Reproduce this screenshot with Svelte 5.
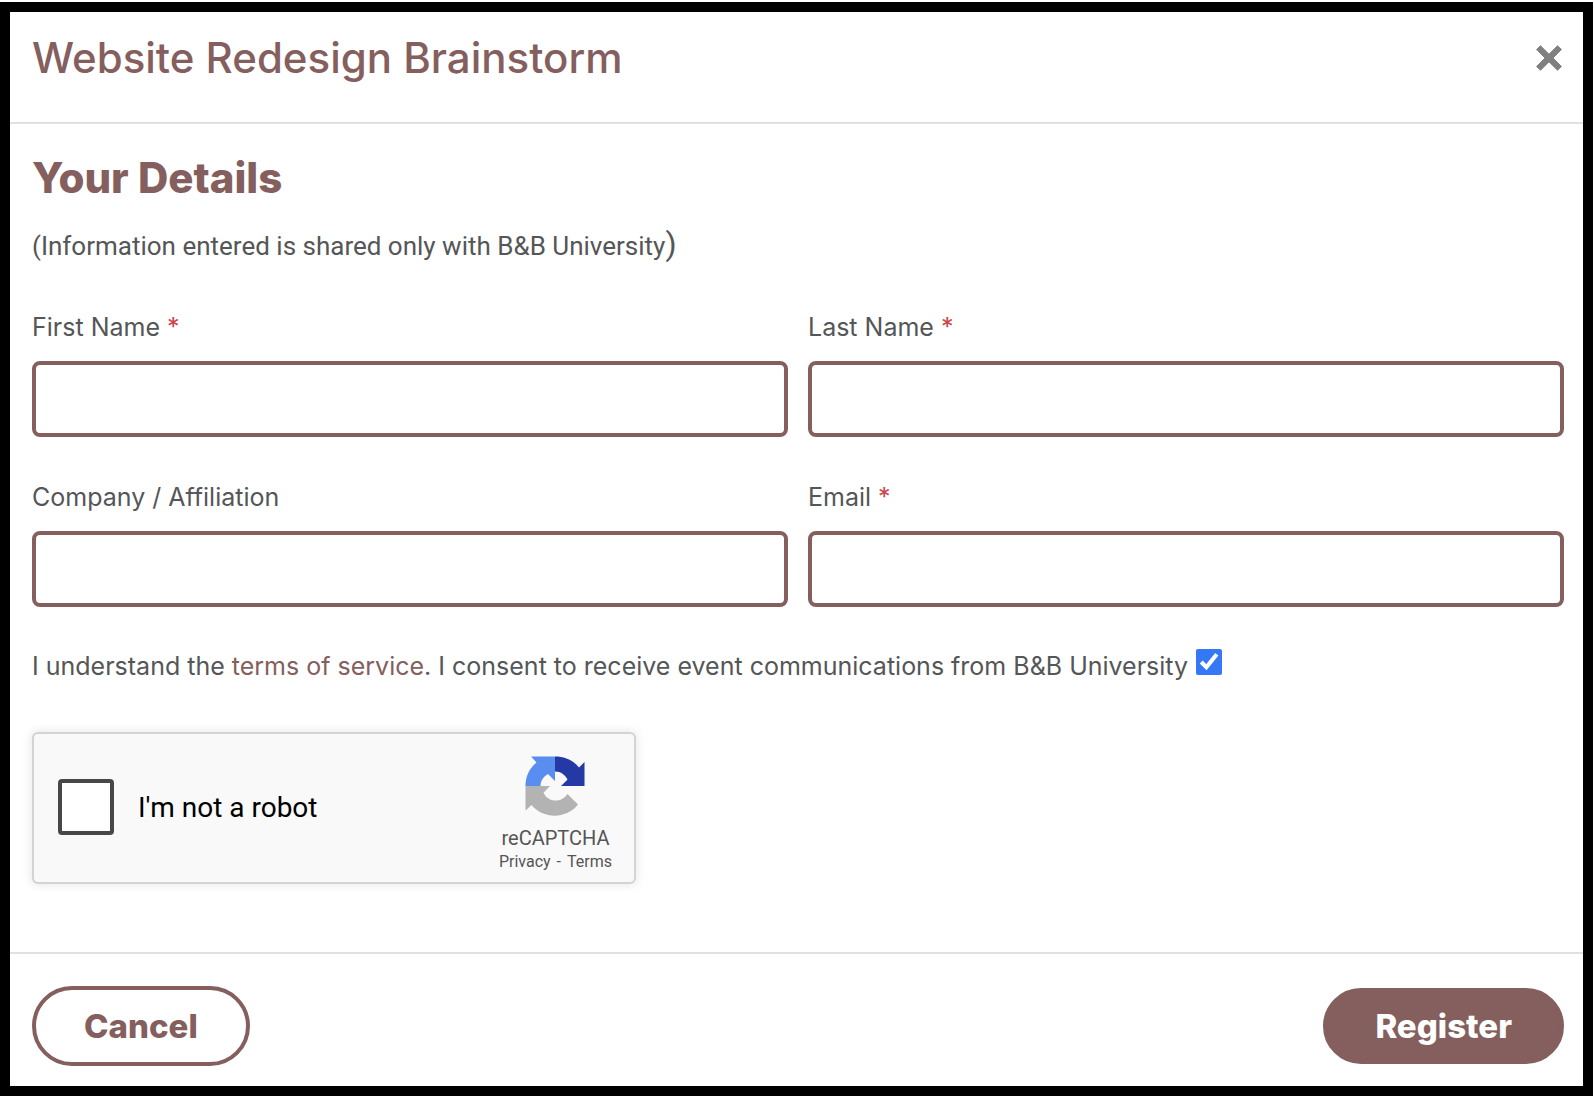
<script>
	let fields = [
		{ id: 'first-name', label: 'First Name', type: 'text', required: true },
		{ id: 'last-name', label: 'Last Name', type: 'text', required: true },
		{ id: 'company', label: 'Company / Affiliation', type: 'text', required: false },
		{ id: 'email', label: 'Email', type: 'email', required: true }
	];

	let values = {};
	let consent = true;
	let notRobot = false;
</script>

<form class="modal" on:submit|preventDefault>
	<header class="modal-header">
		<h1>Website Redesign Brainstorm</h1>
		<button type="button" class="close" aria-label="Close">
			<svg viewBox="0 0 26 26" width="26" height="26">
				<path
					d="M4.5 0.8 13 9.2 21.5 0.8 25.4 4.5 17 13l8.4 8.5-3.9 3.7L13 16.8l-8.5 8.4-3.9-3.7L9 13 0.6 4.5z"
					fill="#808080"
					stroke="#808080"
					stroke-linejoin="round"
				/>
			</svg>
		</button>
	</header>

	<main class="modal-body">
		<h2>Your Details</h2>
		<p class="note">(Information entered is shared only with B&amp;B University<span>)</span></p>

		<div class="fields">
			{#each fields as field}
				<div class="field">
					<label for={field.id}>
						{field.label}
						{#if field.required}<span class="required">*</span>{/if}
					</label>
					<input id={field.id} type={field.type} bind:value={values[field.id]} />
				</div>
			{/each}
		</div>

		<div class="consent">
			<label for="consent">
				I understand the <a href="#terms">terms of service</a>. I consent to receive event
				communications from B&amp;B University
			</label>
			<input id="consent" type="checkbox" bind:checked={consent} />
		</div>

		<!-- Captcha -->
		<div class="captcha">
			<input id="robot" type="checkbox" bind:checked={notRobot} />
			<label for="robot">I'm not a robot</label>
			<div class="captcha-brand">
				<svg viewBox="0 0 60 60" width="60" height="60" aria-hidden="true">
					<path
						d="M30 0.5C40 0.5 48.5 4.5 54 11.5L59.5 6V30H36L42.5 23.5C40 19 36 15.5 30 15.5Z"
						fill="#2439a5"
					/>
					<path
						d="M6 0.5H30V25L23 18C18.5 20.5 15.5 24.5 15.5 30H0.5C0.5 20.5 4.5 12 11.5 6.5Z"
						fill="#5a8df0"
					/>
					<path
						d="M0.5 30H25L18.5 36.8C23 46.5 36 47.5 42.5 38L53 48.5C41 63.5 18 63 6.5 49L0.5 54.5Z"
						fill="#b3b3b3"
					/>
				</svg>
				<span class="brand-name">reCAPTCHA</span>
				<div class="brand-links">
					<a href="#privacy">Privacy</a>
					<span>-</span>
					<a href="#captcha-terms">Terms</a>
				</div>
			</div>
		</div>
	</main>

	<footer class="modal-footer">
		<button type="button" class="cancel">Cancel</button>
		<button type="submit" class="register">Register</button>
	</footer>
</form>

<style>
	:global(body) {
		background: #fff;
	}

	.modal,
	.modal * {
		box-sizing: border-box;
	}

	.modal {
		display: flex;
		flex-direction: column;
		min-height: calc(100vh - 4px);
		margin: 2px 1px 2px 0;
		border: 10px solid #000;
		color: #555657;
		font-family: Inter, 'Liberation Sans', sans-serif;
		font-size: 25px;
		line-height: 40px;
	}

	h1,
	h2,
	p {
		margin: 0;
	}

	h1,
	h2 {
		color: #855e5e;
		font-size: 42px;
		line-height: 50px;
	}

	h1 {
		font-weight: 500;
	}

	h2 {
		font-weight: 800;
	}

	a {
		color: #855e5e;
		text-decoration: none;
	}

	button {
		font-family: inherit;
		cursor: pointer;
	}

	.modal-header {
		display: flex;
		justify-content: space-between;
		align-items: center;
		padding: 21px 21px 39px 22px;
		border-bottom: 2px solid #dee2e6;
	}

	.close {
		display: flex;
		padding: 0;
		border: none;
		background: none;
	}

	.modal-body {
		flex: 1;
		padding: 29px 19px 48px 22px;
	}

	.note {
		margin-top: 23px;
		font-family: Roboto, sans-serif;
		font-size: 26px;
	}

	.note span {
		font-size: 32px;
		line-height: 32px;
	}

	.fields {
		display: grid;
		grid-template-columns: 1fr 1fr;
		gap: 40px 20px;
		margin-top: 41px;
	}

	.field label {
		display: block;
		margin-bottom: 14px;
	}

	.required {
		color: #cb444a;
	}

	.field input {
		display: block;
		width: 100%;
		height: 76px;
		padding: 12px 24px;
		border: 4px solid #855e5e;
		border-radius: 8px;
		background: #fff;
		color: inherit;
		font: inherit;
	}

	.consent {
		display: flex;
		align-items: center;
		gap: 8px;
		margin-top: 39px;
	}

	.consent input {
		flex: none;
		width: 26px;
		height: 26px;
		margin: 0 0 8px;
		accent-color: #3478f6;
	}

	.captcha {
		display: flex;
		align-items: center;
		width: 604px;
		max-width: 100%;
		margin-top: 46px;
		padding: 22px 22px 8px 24px;
		border: 2px solid #d3d3d3;
		border-radius: 6px;
		background: #f9f9f9;
		box-shadow: 0 0 8px 2px rgba(0, 0, 0, 0.08);
		font-family: Roboto, sans-serif;
	}

	.captcha input {
		appearance: none;
		width: 56px;
		height: 56px;
		margin: 0 24px 16px 0;
		border: 4px solid #474747;
		border-radius: 4px;
		background: #fff;
	}

	.captcha input:checked {
		background: #4a90e2;
	}

	.captcha label {
		flex: 1;
		margin-bottom: 14px;
		color: #000;
		font-size: 28px;
	}

	.captcha-brand {
		display: flex;
		flex-direction: column;
		align-items: center;
		color: #555;
	}

	.brand-name {
		margin-top: 10px;
		font-size: 20px;
		line-height: 24px;
	}

	.brand-links {
		display: flex;
		gap: 6px;
		font-size: 16px;
		line-height: 24px;
	}

	.brand-links a {
		color: inherit;
	}

	.modal-footer {
		display: flex;
		justify-content: space-between;
		align-items: center;
		padding: 32px 19px 20px 22px;
		border-top: 2px solid #dee2e6;
	}

	.modal-footer button {
		padding: 16px 48px;
		border: 4px solid #855e5e;
		border-radius: 40px;
		background: #fff;
		color: #855e5e;
		font-size: 33px;
		font-weight: 800;
		line-height: 40px;
	}

	.modal-footer .register {
		padding: 14px 48px;
		background: #855e5e;
		color: #fff;
	}
</style>
